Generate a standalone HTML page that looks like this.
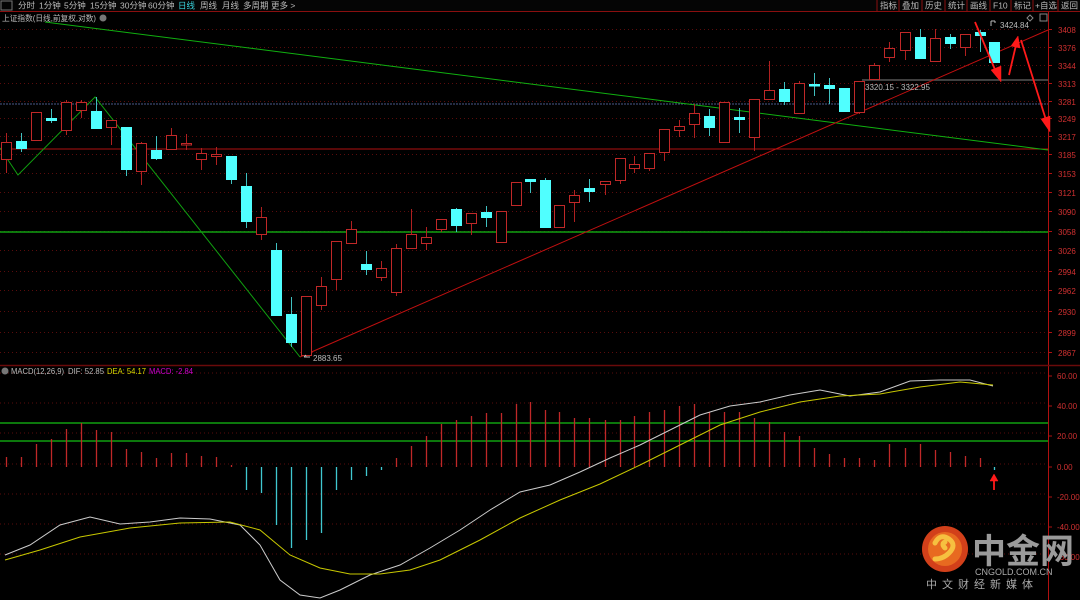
<!DOCTYPE html>
<html><head><meta charset="utf-8"><style>
html,body{margin:0;padding:0;background:#000;width:1080px;height:600px;overflow:hidden;font-family:"Liberation Sans","Noto Sans CJK SC",sans-serif}
svg{position:absolute;left:0;top:0}
</style></head><body>
<svg id="s" width="1080" height="600" xmlns="http://www.w3.org/2000/svg" font-family="Liberation Sans, Noto Sans CJK SC, sans-serif">
<rect width="1080" height="600" fill="#000"/>
<rect x="0" y="0" width="1080" height="11" fill="#050505"/>
<line x1="0" y1="11.5" x2="1080" y2="11.5" stroke="#8a0f0f"/>
<rect x="1" y="1" width="11" height="9" fill="none" stroke="#777"/>
<g font-size="8.5" fill="#bbb">
<text x="18" y="8.5">分时</text><text x="39" y="8.5">1分钟</text><text x="64" y="8.5">5分钟</text><text x="90" y="8.5">15分钟</text><text x="120" y="8.5">30分钟</text><text x="148" y="8.5">60分钟</text>
<text x="178" y="8.5" fill="#3ad6e0">日线</text><text x="200" y="8.5">周线</text><text x="222" y="8.5">月线</text><text x="243" y="8.5">多周期</text><text x="271" y="8.5">更多 &gt;</text>
</g>
<g font-size="8.5" fill="#bbb">
<text x="880" y="8.5">指标</text><text x="902" y="8.5">叠加</text><text x="925" y="8.5">历史</text><text x="948" y="8.5">统计</text><text x="970" y="8.5">画线</text><text x="993" y="8.5">F10</text><text x="1014" y="8.5">标记</text><text x="1035" y="8.5">+自选</text><text x="1061" y="8.5">返回</text>
</g>
<g stroke="#8a0f0f"><line x1="877" y1="0" x2="877" y2="11"/><line x1="899" y1="0" x2="899" y2="11"/><line x1="922" y1="0" x2="922" y2="11"/><line x1="945" y1="0" x2="945" y2="11"/><line x1="967" y1="0" x2="967" y2="11"/><line x1="990" y1="0" x2="990" y2="11"/><line x1="1011" y1="0" x2="1011" y2="11"/><line x1="1033" y1="0" x2="1033" y2="11"/><line x1="1058" y1="0" x2="1058" y2="11"/></g>
<text x="2" y="21" font-size="8" fill="#bbb" textLength="94" lengthAdjust="spacingAndGlyphs">上证指数(日线,前复权,对数)</text>
<circle cx="103" cy="18" r="3.5" fill="#777"/>
<g fill="none" stroke="#888"><path d="M1030 15 l3 3 -3 3 -3 -3z"/><rect x="1040" y="14" width="7" height="7"/></g>
<g id="grid"></g>
<g id="lines"></g>
<g id="cand"></g>
<g id="macd"></g>
<line x1="1048.5" y1="12" x2="1048.5" y2="600" stroke="#b01010"/>
<line x1="0" y1="365.5" x2="1080" y2="365.5" stroke="#6a0a0a" stroke-width="1.5"/>
<g id="ax" font-size="8" fill="#d03030"></g>
<text x="1000" y="28" font-size="8" fill="#bbb">3424.84</text>
<path d="M991 21 l0 5 M991 21 l4 0 M995 21 l0 2" stroke="#bbb" fill="none"/>
<text x="865" y="90" font-size="8" fill="#bbb">3320.15 - 3322.95</text>
<text x="313" y="361" font-size="8" fill="#bbb">2883.65</text>
<path d="M304 357 h6 M304 357 l2 -2" stroke="#bbb" fill="none"/>
<g font-size="8">
<circle cx="5" cy="371" r="3.5" fill="#777"/>
<text x="11" y="374" fill="#bbb" textLength="53" lengthAdjust="spacingAndGlyphs">MACD(12,26,9)</text><text x="68" y="374" fill="#bbb" textLength="36" lengthAdjust="spacingAndGlyphs">DIF: 52.85</text><text x="107" y="374" fill="#d8d800" textLength="39" lengthAdjust="spacingAndGlyphs">DEA: 54.17</text><text x="149" y="374" fill="#d000d0" textLength="44" lengthAdjust="spacingAndGlyphs">MACD: -2.84</text>
</g>
<g fill="#ff1a1a" stroke="#ff1a1a" stroke-width="1.8">
<line x1="975" y1="22" x2="996" y2="72"/><path d="M991 70 L1001 82 L1001 66z" stroke-width="0.5"/>
<line x1="1009" y1="75" x2="1016" y2="45"/><path d="M1011 46 L1018 36 L1020 48z" stroke-width="0.5"/>
<line x1="1021" y1="40" x2="1046" y2="120"/><path d="M1041 119 L1050 132 L1050 116z" stroke-width="0.5"/>
<line x1="994" y1="478" x2="994" y2="490"/><path d="M990 481 L994 474 L998 481z" stroke-width="0.5"/>
</g>
<circle cx="945" cy="549" r="23" fill="#d2401a"/>
<circle cx="945" cy="549" r="17" fill="#e86a20"/>
<path d="M935 543 q5 -10 14 -4 q8 6 0 14 q-6 6 -14 6 M945 548 q-4 -4 0 -6" stroke="#f6c040" stroke-width="5" fill="none" stroke-linecap="round"/>
<text x="972" y="563" font-size="34" font-weight="bold" fill="#9a9a9a" font-family="Noto Sans CJK SC, sans-serif">中金网</text>
<text x="975" y="575" font-size="9" fill="#aaa">CNGOLD.COM.CN</text>
<text x="926" y="588" font-size="11" fill="#aaa" letter-spacing="5" font-family="Noto Sans CJK SC, sans-serif">中文财经新媒体</text>
</svg>
<script>
var NS="http://www.w3.org/2000/svg";
function el(p,t,a){var e=document.createElementNS(NS,t);for(var k in a)e.setAttribute(k,a[k]);document.getElementById(p).appendChild(e);return e;}
var labs=[[33,"3408"],[51,"3376"],[69,"3344"],[87,"3313"],[105,"3281"],[122,"3249"],[140,"3217"],[158,"3185"],[177,"3153"],[196,"3121"],[215,"3090"],[235,"3058"],[254,"3026"],[275,"2994"],[294,"2962"],[315,"2930"],[336,"2899"],[356,"2867"]];
labs.forEach(function(l){el("grid","line",{x1:0,x2:1048,y1:l[0]-3.5,y2:l[0]-3.5,stroke:"#5a0c0c","stroke-dasharray":"1,3"});var t=el("ax","text",{x:1058,y:l[0]});t.textContent=l[1];el("ax","line",{x1:1048,x2:1052,y1:l[0]-3.5,y2:l[0]-3.5,stroke:"#b01010"});});
var ml=[[376,"60.00"],[406,"40.00"],[436,"20.00"],[467,"0.00"],[497,"-20.00"],[527,"-40.00"],[557,"-60.00"]];
ml.forEach(function(l){el("grid","line",{x1:0,x2:1048,y1:l[0]-3,y2:l[0]-3,stroke:"#5a0c0c","stroke-dasharray":"1,3"});var t=el("ax","text",{x:1057,y:l[0]+3});t.textContent=l[1];el("ax","line",{x1:1048,x2:1052,y1:l[0],y2:l[0],stroke:"#b01010"});});
el("lines","line",{x1:0,x2:1048,y1:104,y2:104,stroke:"#4a5a8a","stroke-dasharray":"2,1"});
el("lines","line",{x1:0,x2:1048,y1:149,y2:149,stroke:"#b01010"});
el("lines","line",{x1:0,x2:1048,y1:232,y2:232,stroke:"#10a010","stroke-width":1.5});
el("lines","line",{x1:862,x2:1048,y1:80,y2:80,stroke:"#555","stroke-width":1.5});
el("lines","line",{x1:0,x2:1048,y1:423,y2:423,stroke:"#10a010","stroke-width":1.5});
el("lines","line",{x1:0,x2:1048,y1:441,y2:441,stroke:"#10a010","stroke-width":1.5});
el("lines","line",{x1:45,y1:22,x2:1048,y2:150,stroke:"#10b010"});
el("lines","line",{x1:300,y1:357,x2:1048,y2:30,stroke:"#c01010"});
el("lines","polyline",{points:"0,148 18,175 95,97 300,357",fill:"none",stroke:"#10a010"});
var C=[[6,142,159,133,173,1],[21,141,148,133,152,0],[36,112,140,112,140,1],[51,118,120,109,123,0],[66,102,130,100,135,1],[81,102,110,100,118,1],[96,111,128,97,129,0],[111,120,127,120,145,1],[126,127,169,127,176,0],[141,143,171,142,185,1],[156,150,158,136,160,0],[171,135,149,128,149,1],[186,143,144,134,150,1],[201,153,159,148,170,1],[216,154,156,147,165,1],[231,156,179,156,184,0],[246,186,221,173,228,0],[261,217,234,207,240,1],[276,250,315,243,315,0],[291,314,342,297,347,0],[306,296,355,296,357,1],[321,286,305,277,310,1],[336,241,279,241,290,1],[351,229,243,221,244,1],[366,264,269,251,275,0],[381,268,277,261,281,1],[396,248,292,244,296,1],[411,234,248,209,248,1],[426,237,243,227,250,1],[441,219,229,219,232,1],[456,209,225,208,232,0],[471,213,223,213,235,1],[486,212,217,206,227,0],[501,211,242,211,243,1],[516,182,205,182,205,1],[530,179,181,179,193,0],[545,180,227,178,227,0],[559,205,227,205,227,1],[574,195,202,190,222,1],[589,188,191,179,202,0],[605,181,184,181,195,1],[620,158,180,158,184,1],[634,164,168,156,173,1],[649,153,168,153,171,1],[664,129,152,129,161,1],[679,126,130,120,137,1],[694,113,124,104,138,1],[709,116,127,109,136,0],[724,102,142,102,143,1],[739,117,119,108,133,0],[754,99,137,99,151,1],[769,90,99,61,99,1],[784,89,101,82,105,0],[799,83,113,81,113,1],[814,84,85,73,96,0],[829,85,88,78,104,0],[844,88,111,88,111,0],[859,81,112,81,114,1],[874,65,79,63,79,1],[889,48,57,42,62,1],[905,32,50,32,60,1],[920,37,58,29,59,0],[935,38,61,29,61,1],[950,37,43,34,49,0],[965,34,47,34,56,1],[980,32,35,30,52,0],[994,42,62,42,62,0]];
C.forEach(function(c){
el("cand","line",{x1:c[0]+.5,x2:c[0]+.5,y1:c[3],y2:c[4],stroke:c[5]?"#b02020":"#40c0c0"});
var h=Math.max(c[2]-c[1],1.5);
if(c[5])el("cand","rect",{x:c[0]-4.5,y:c[1]+.5,width:10,height:h,fill:"#000",stroke:"#c02828"});
else el("cand","rect",{x:c[0]-5,y:c[1],width:11,height:h+1,fill:"#50ffff"});});
var B=[457,457,444,439,429,423,430,432,449,452,458,453,453,456,457,465,490,493,525,548,540,533,490,480,476,470,458,446,436,424,420,416,413,413,404,402,410,412,418,418,420,420,416,412,410,406,404,412,412,412,418,422,432,436,448,454,458,458,460,444,448,444,450,452,456,458,470];
B.forEach(function(b,i){var x=C[i][0]+.5;el("macd","line",{x1:x,x2:x,y1:467,y2:b,stroke:b<467?"#c02828":"#40c8d0","stroke-width":1.3});});
el("macd","polyline",{points:"5,555 30,545 60,525 90,517 120,524 150,522 180,518 210,519 240,525 260,545 280,580 300,595 320,598 340,590 370,575 400,565 430,548 460,530 490,510 520,492 550,485 580,472 610,458 640,445 670,430 700,415 730,406 760,402 790,395 820,390 850,396 880,392 910,381 940,380 970,380 993,386",fill:"none",stroke:"#ccc"});
el("macd","polyline",{points:"5,560 40,550 80,537 130,528 180,523 230,522 260,530 290,555 320,568 350,574 380,574 410,570 440,560 480,540 520,518 560,500 600,484 640,465 680,445 720,425 760,412 800,402 840,396 880,394 920,387 960,382 993,385",fill:"none",stroke:"#c8c800"});
</script>
</body></html>
